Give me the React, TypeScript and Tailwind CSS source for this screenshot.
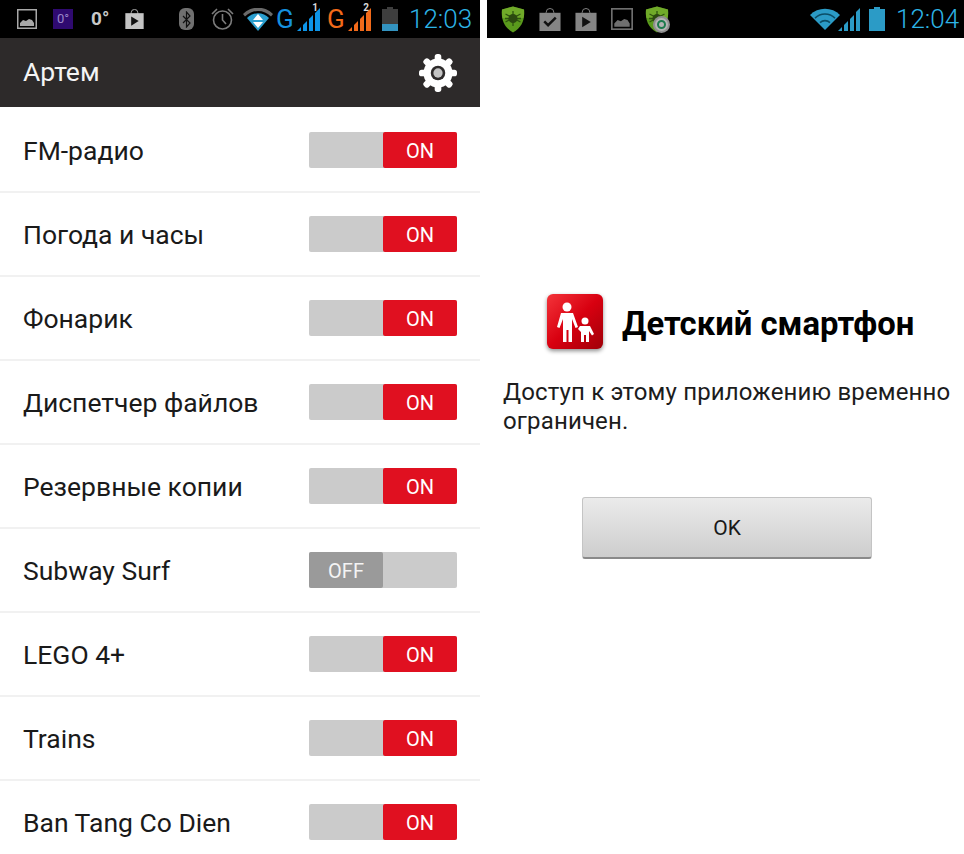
import React from 'react';

const apps = [
  { name: 'FM-радио', on: true },
  { name: 'Погода и часы', on: true },
  { name: 'Фонарик', on: true },
  { name: 'Диспетчер файлов', on: true },
  { name: 'Резервные копии', on: true },
  { name: 'Subway Surf', on: false },
  { name: 'LEGO 4+', on: true },
  { name: 'Trains', on: true },
  { name: 'Ban Tang Co Dien', on: true },
];

const PictureIcon: React.FC<{ w: number; h: number; dim?: boolean }> = ({ w, h, dim }) => (
  <svg width={w} height={h} viewBox="0 0 20 20">
    <rect x="0.75" y="0.75" width="18.5" height="18.5" fill="none" stroke={dim ? '#6f6f6f' : '#a8a8a8'} strokeWidth="1.5" />
    <path d="M3 17v-3l3-3 3 1 3-2 3 1 2 3v3z" fill={dim ? '#6f6f6f' : '#a8a8a8'} />
  </svg>
);

const BagIcon: React.FC<{ w: number; h: number; check?: boolean; dim?: boolean }> = ({ w, h, check, dim }) => {
  const c = dim ? '#858585' : '#c4c4c4';
  return (
    <svg width={w} height={h} viewBox="0 0 22 24">
      <path d="M7 6V4.5a4 4 0 0 1 8 0V6" fill="none" stroke={c} strokeWidth="1" />
      <rect x="0" y="5" width="22" height="19" fill={c} />
      {check ? (
        <path d="M5 14l4 4 8-8" fill="none" stroke="#111" strokeWidth="2.6" />
      ) : (
        <path d="M7 9l9 5.5-9 5.500z" fill="#111" />
      )}
    </svg>
  );
};

const Signal: React.FC<{ color: string; label?: string }> = ({ color, label }) => (
  <div className="relative w-[24px] h-[24px]">
    <svg width="24" height="24" viewBox="0 0 24 24">
      <path d="M0 24L4 20V24ZM6 24V18L10 14V24ZM12 24V12L16 8V24ZM18 24V6L23 1V24Z" fill={color} />
    </svg>
    {label && <span className="absolute right-[3px] top-[-5px] text-[10px] leading-[12px] font-bold text-[#d8d8d8]">{label}</span>}
  </div>
);

const Shield: React.FC<{ refresh?: boolean }> = ({ refresh }) => (
  <svg width="25" height="27" viewBox="0 0 25 27">
    <path d="M12 0.500l11 3c1 10-2 18-11 23C3 21.500 0 13.500 1 3.500z" fill="#5a9a1c" />
    <path d="M12 0.500l11 3c.3 3 .2 6-.4 8.500H1.400C.8 9.500.7 6.500 1 3.500z" fill="#7fb532" opacity="0.6" />
    <path d="M12 5v15M4.500 8l15 8M19.500 8l-15 8M4 12.500h16" stroke="#2f5410" strokeWidth="1.300" />
    <circle cx="12" cy="12.500" r="4.500" fill="#2c4a10" />
    {refresh && (
      <>
        <circle cx="16.500" cy="18.500" r="8.500" fill="#8f8f8f" />
        <circle cx="16.500" cy="18.500" r="6.500" fill="#b4b4b4" />
        <circle cx="16.500" cy="18.500" r="3.500" fill="none" stroke="#1c7a4c" strokeWidth="2" />
      </>
    )}
  </svg>
);

const StatusTime: React.FC<{ value: string }> = ({ value }) => (
  <span className="text-[26px] leading-[38px] font-light text-[#2db4e6]">{value}</span>
);

const Toggle: React.FC<{ on: boolean }> = ({ on }) => (
  <div className="flex w-[148px] h-[36px] bg-[#cbcbcb] rounded-[2px]">
    {on ? (
      <>
        <div className="w-[74px]" />
        <div className="w-[74px] flex items-center justify-center pt-[2px] bg-[#e01020] rounded-[2px] text-[20px] text-white">ON</div>
      </>
    ) : (
      <div className="w-[74px] flex items-center justify-center pt-[2px] bg-[#9a9a9a] rounded-[2px] text-[20px] text-[#f4f4f4]">OFF</div>
    )}
  </div>
);

const LeftStatus = () => (
  <div className="flex items-center h-[38px] bg-black pl-[17px]">
    <PictureIcon w={20} h={20} />
    <div className="ml-[16px] w-[20px] h-[20px] flex items-center justify-center bg-[#2f0a70] text-[13px] text-[#9a86c8]">0°</div>
    <span className="ml-[18px] w-[34px] text-[19px] font-bold text-[#c8c8c8]">0°</span>
    <BagIcon w={19} h={20} />
    <div className="ml-[35px] w-[15px] h-[22px] flex items-center justify-center rounded-[6px] bg-[#707070]">
      <svg width="9" height="17" viewBox="0 0 9 17">
        <path d="M1 5l7 7-3.500 4V1L8 5l-7 7" fill="none" stroke="#111" strokeWidth="1.200" />
      </svg>
    </div>
    <svg className="ml-[16px]" width="25" height="24" viewBox="0 0 25 24">
      <circle cx="12.500" cy="13" r="9" fill="none" stroke="#7c7c7c" strokeWidth="1.600" />
      <path d="M12.500 7v6l3.500 4M2 7l5-5M23 7l-5-5" fill="none" stroke="#7c7c7c" strokeWidth="1.600" />
    </svg>
    <svg className="ml-[8px]" width="30" height="23" viewBox="0 0 30 23">
      <path d="M0 6a21 21 0 0 1 30 0l-2 2.500a18 18 0 0 0-26 0z" fill="#6a6a6a" />
      <path d="M4 10a15 15 0 0 1 22 0L15 23z" fill="#2b9fcf" />
      <path d="M15 6l5 6h-10zM15 20l5-6h-10z" fill="#fff" />
    </svg>
    <span className="ml-[3px] w-[21px] text-[26px] leading-[38px] text-[#1590df]">G</span>
    <Signal color="#0d94e8" label="1" />
    <span className="ml-[6px] w-[21px] text-[26px] leading-[38px] text-[#f26a1a]">G</span>
    <Signal color="#f26a1a" label="2" />
    <svg className="ml-[10px]" width="16" height="24" viewBox="0 0 16 24">
      <path d="M5 0h6v2h5v22H0V2h5z" fill="#3e3e3e" />
      <rect x="0" y="17" width="16" height="7" fill="#3393c0" />
    </svg>
    <div className="ml-[11px]"><StatusTime value="12:03" /></div>
  </div>
);

const RightStatus = () => (
  <div className="flex items-center h-[38px] bg-black pl-[14px]">
    <Shield />
    <div className="ml-[13px]"><BagIcon w={22} h={23} check dim /></div>
    <div className="ml-[14px]"><BagIcon w={22} h={23} dim /></div>
    <div className="ml-[13px]"><PictureIcon w={24} h={22} dim /></div>
    <div className="ml-[11px]"><Shield refresh /></div>
    <svg className="ml-[140px]" width="30" height="22" viewBox="0 0 30 22">
      <path d="M0 7a21 21 0 0 1 30 0L15 22z" fill="#2b9bc6" />
      <path d="M4.500 9.500a15 15 0 0 1 21 0l-1 1.200a13.500 13.500 0 0 0-19 0zM9.500 14a8 8 0 0 1 11 0l-1 1.200a6.500 6.500 0 0 0-9 0z" fill="#0b4d66" />
    </svg>
    <svg className="-ml-[2px]" width="22" height="23" viewBox="0 0 22 23">
      <path d="M0 23L4 19V23ZM6 23V17L10 13V23ZM12 23V11L16 7V23ZM18 23V4L22 0V23Z" fill="#2b9bc6" />
    </svg>
    <svg className="ml-[9px]" width="16" height="24" viewBox="0 0 16 24">
      <path d="M5 0h6v2h5v22H0V2h5z" fill="#2b9bc6" />
    </svg>
    <div className="ml-[11px]"><StatusTime value="12:04" /></div>
  </div>
);

const Gear = () => (
  <svg width="38" height="38" viewBox="0.500 0.500 23 23">
    <g fill="#fff">
      {[0, 45, 90, 135, 180, 225, 270, 315].map((deg) => (
        <rect key={deg} x="10" y="0.500" width="4" height="6" rx="1.600" transform={`rotate(${deg} 12 12)`} />
      ))}
      <circle cx="12" cy="12" r="8.800" />
    </g>
    <circle cx="12" cy="12" r="4.400" fill="#2d2a2a" />
    <circle cx="12" cy="12" r="2.800" fill="#c4c4c4" />
  </svg>
);

const ParentChildIcon = () => (
  <svg width="57" height="57" viewBox="0 0 57 57" className="drop-shadow-[0_2px_2px_rgba(0,0,0,0.45)]">
    <defs>
      <linearGradient id="red" x1="0" y1="0" x2="1" y2="1">
        <stop offset="0" stopColor="#f4343a" />
        <stop offset="0.5" stopColor="#d80010" />
        <stop offset="1" stopColor="#a00008" />
      </linearGradient>
    </defs>
    <rect x="0" y="0" width="56" height="55" rx="6" fill="url(#red)" />
    <g fill="#fff">
      <circle cx="20" cy="13" r="4.500" />
      <path d="M14 19h12l5 14-2.500 1-3.500-9v23h-3.500V36h-2v12H16V25l-3.500 9-2.500-1z" />
      <circle cx="38" cy="27" r="3.500" />
      <path d="M33 32h10l4 8-2 1.500-3-4.500v11h-3v-7h-2v7h-3V38l-3-3z" />
    </g>
  </svg>
);

const App = () => (
  <div className="flex w-[964px] h-[854px] overflow-hidden bg-white font-['Roboto',sans-serif]">
    <div className="w-[480px] shrink-0">
      <LeftStatus />
      <div className="flex items-center justify-between h-[69px] bg-[#2d2a2a] pl-[23px] pr-[23px]">
        <span className="text-[26.500px] text-[#f4f4f4] leading-[32px] -mt-[2px]">Артем</span>
        <Gear />
      </div>
      <div className="pt-[2px]">
        {apps.map((app) => (
          <div key={app.name} className="flex items-center justify-between h-[84px] pl-[23px] pr-[23px] border-b-2 border-[#f1f1f1]">
            <span className="text-[26.500px] leading-[32px] mt-[2px] text-[#1a1a1a]">{app.name}</span>
            <Toggle on={app.on} />
          </div>
        ))}
      </div>
    </div>
    <div className="ml-[7px] w-[477px] shrink-0">
      <RightStatus />
      <div className="flex flex-col pt-[256px] pl-[16px] pr-[8px]">
        <div className="flex items-center pl-[44px] gap-[18px]">
          <ParentChildIcon />
          <span className="text-[32.800px] leading-[38px] mt-[2px] font-bold text-black">Детский смартфон</span>
        </div>
        <p className="mt-[27px] text-[24px] leading-[29px] tracking-[0.15px] text-[#1c1c1c]">Доступ к этому приложению временно ограничен.</p>
        <button className="mt-[61px] ml-[79px] w-[290px] h-[62px] pt-[2px] rounded-[3px] border border-[#c4c4c4] border-b-2 border-b-[#8a8a8a] bg-gradient-to-b from-[#ebebeb] to-[#cdcdcd] text-[21px] text-[#1a1a1a]">
          OK
        </button>
      </div>
    </div>
  </div>
);

export default App;
